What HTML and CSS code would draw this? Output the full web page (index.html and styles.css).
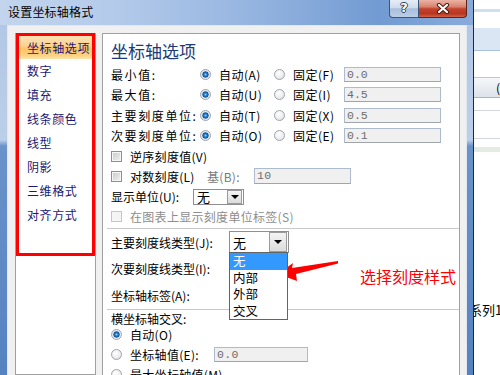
FILE: index.html
```html
<!DOCTYPE html>
<html lang="zh-CN">
<head>
    <meta charset="UTF-8">
    <title>设置坐标轴格式</title>
    <link rel="stylesheet" href="styles.css">
</head>
<body>
<div class="screen">
    <div class="window">
        <div class="titlebar">
            <span class="title">设置坐标轴格式</span>
            <div class="caption-buttons">
                <span class="btn-help">?</span>
                <span class="btn-close">
                    <svg width="14" height="11" viewBox="0 0 14 11">
                        <path d="M3 2 L11 9 M11 2 L3 9" stroke="#4a1c12" stroke-width="4.2" stroke-linecap="round"/>
                        <path d="M3 2 L11 9 M11 2 L3 9" stroke="#ffffff" stroke-width="2.2" stroke-linecap="round"/>
                    </svg>
                </span>
            </div>
        </div>

        <div class="client">
            <div class="nav-panel">
                <ul class="nav-list">
                    <li class="active">坐标轴选项</li>
                    <li>数字</li>
                    <li>填充</li>
                    <li>线条颜色</li>
                    <li>线型</li>
                    <li>阴影</li>
                    <li>三维格式</li>
                    <li>对齐方式</li>
                </ul>
            </div>

            <div class="options-panel">
                <h2 class="section-title">坐标轴选项</h2>

                <div class="value-row first">
                    <span class="value-label">最小值:</span>
                    <span class="opt opt-auto"><i class="radio checked"></i>自动(A)</span>
                    <span class="opt opt-fixed"><i class="radio"></i>固定(F)</span>
                    <span class="field">0.0</span>
                </div>
                <div class="value-row">
                    <span class="value-label">最大值:</span>
                    <span class="opt opt-auto"><i class="radio checked"></i>自动(U)</span>
                    <span class="opt opt-fixed"><i class="radio"></i>固定(I)</span>
                    <span class="field">4.5</span>
                </div>
                <div class="value-row">
                    <span class="value-label">主要刻度单位:</span>
                    <span class="opt opt-auto"><i class="radio checked"></i>自动(T)</span>
                    <span class="opt opt-fixed"><i class="radio"></i>固定(X)</span>
                    <span class="field">0.5</span>
                </div>
                <div class="value-row">
                    <span class="value-label">次要刻度单位:</span>
                    <span class="opt opt-auto"><i class="radio checked"></i>自动(O)</span>
                    <span class="opt opt-fixed"><i class="radio"></i>固定(E)</span>
                    <span class="field">0.1</span>
                </div>

                <div class="check-row"><i class="checkbox"></i>逆序刻度值(V)</div>
                <div class="check-row">
                    <i class="checkbox"></i><span class="log-text">对数刻度(L)</span>
                    <span class="base-label">基(B):</span>
                    <span class="field field-base">10</span>
                </div>
                <div class="unit-row">
                    <span class="unit-label">显示单位(U):</span>
                    <span class="select unit-select"><span class="select-value">无</span><span class="select-btn"><i class="caret"></i></span></span>
                </div>
                <div class="check-row disabled"><i class="checkbox"></i>在图表上显示刻度单位标签(S)</div>

                <hr class="sep">

                <div class="tick-row">
                    <span class="tick-label">主要刻度线类型(J):</span>
                    <span class="select tick-select">
                        <span class="select-value">无</span><span class="select-btn"><i class="caret"></i></span>
                        <ul class="dropdown">
                            <li class="selected">无</li>
                            <li>内部</li>
                            <li>外部</li>
                            <li>交叉</li>
                        </ul>
                    </span>
                </div>
                <div class="tick-row">
                    <span class="tick-label">次要刻度线类型(I):</span>
                </div>
                <div class="tick-row tall">
                    <span class="tick-label">坐标轴标签(A):</span>
                </div>

                <hr class="sep flush">

                <div class="cross-title">横坐标轴交叉:</div>
                <div class="radio-row"><i class="radio checked"></i>自动(O)</div>
                <div class="radio-row"><i class="radio"></i><span class="cross-text">坐标轴值(E):</span><span class="field field-cross">0.0</span></div>
                <div class="radio-row"><i class="radio"></i>最大坐标轴值(M)</div>

                <!-- 标注：箭头和说明文字 -->
                <svg class="note-arrow" width="75" height="35" viewBox="0 0 75 35">
                    <polygon points="8,19 23,8 22,13 68,6 68,8.5 26,19 27,26" fill="#ff0000"/>
                </svg>
                <span class="note-text">选择刻度样式</span>
            </div>
        </div>
    </div>

    <div class="backdrop">
        <div class="bd-gap h9"></div>
        <div class="bd-line light"></div>
        <div class="bd-gap h16"></div>
        <div class="bd-band"></div>
        <div class="bd-rule"></div>
        <div class="bd-gap h26"></div>
        <div class="bd-button">(</div>
        <div class="bd-gap h12"></div>
        <div class="bd-hair"></div>
        <div class="bd-gap h27"></div>
        <div class="bd-hair"></div>
        <div class="bd-gap h8"></div>
        <div class="bd-green"></div>
        <div class="bd-gap h150"></div>
        <div class="bd-legend">系列1</div>
    </div>
</div>
</body>
</html>
```

FILE: styles.css
```css
body {
    margin: 0;
    font-family: "Noto Sans CJK SC", "Noto Sans", sans-serif;
    font-size: 12px;
    color: #000;
}
.screen {
    display: flex;
    width: 500px;
    height: 375px;
    overflow: hidden;
}

/* 窗口外框 */
.window {
    flex: none;
    width: 473px;
    border-right: 1px solid #1d2b3c;
    display: flex;
    flex-direction: column;
    background: linear-gradient(#b0c6e4 0, #bccfe9 140px, #6a93ca 146px, #5682c1 100%);
}
.titlebar {
    height: 25px;
    display: flex;
    align-items: flex-start;
    background: linear-gradient(90deg, #c3d5ed 0, #b3caea 25%, #93b3df 55%, #729bd3 80%, #88abda 100%);
}
.title {
    flex: 1;
    padding-left: 8px;
    line-height: 24px;
    font-size: 12px;
    letter-spacing: 0.2px;
}
.caption-buttons {
    display: flex;
    margin-right: 6px;
}
.btn-help {
    width: 28px;
    height: 17px;
    border: 1px solid #3c5677;
    border-top: none;
    border-radius: 0 0 0 4px;
    background: linear-gradient(#e6edf6, #cfdbec 45%, #a9bedc 52%, #bccfe7);
    text-align: center;
    line-height: 17px;
    font: bold 13px "DejaVu Sans", sans-serif;
    color: #fff;
    text-shadow: 1px 0 #2c405a, -1px 0 #2c405a, 0 1px #2c405a, 0 -1px #2c405a;
}
.btn-close {
    width: 47px;
    height: 17px;
    border: 1px solid #5e2418;
    border-top: none;
    border-left: none;
    border-radius: 0 0 4px 0;
    background: linear-gradient(#ebb2a5, #d8826e 40%, #c5432c 52%, #b8351f 80%, #d26247);
    display: flex;
    align-items: center;
    justify-content: center;
}

/* 对话框客户区 */
.client {
    flex: 1;
    min-height: 0;
    margin: 0 6px 0 7px;
    padding: 7px 6px 0 7px;
    border: 1px solid #e2e8f0;
    border-bottom: none;
    background-color: #f0f0f0;
    display: flex;
    gap: 6px;
    overflow: hidden;
}

/* 左侧导航 */
.nav-panel {
    flex: none;
    width: 79px;
    background-color: #fff;
    border: 1px solid #a0a0a0;
    border-top: none;
}
.nav-list {
    list-style: none;
    margin: 0;
    padding: 0;
    height: 217px;
    border: 3px solid #ff0000;
}
.nav-list li {
    height: 24px;
    line-height: 24px;
    padding-left: 8px;
    color: #181877;
    letter-spacing: 0.6px;
    white-space: nowrap;
}
.nav-list li.active {
    height: 23px;
    line-height: 23px;
    background: linear-gradient(#fbe2b6 0, #fdd492 40%, #fcc468 55%, #fdd282 85%, #fde6ae 100%);
}

/* 右侧选项 */
.options-panel {
    flex: 1;
    position: relative;
    background-color: #fff;
    border: 1px solid #a0a0a0;
    border-bottom: none;
    padding: 0 4px 0 8px;
    white-space: nowrap;
}
.section-title {
    margin: 0;
    padding-top: 5px;
    font-size: 17px;
    font-weight: normal;
    line-height: 24px;
    color: #1d3b78;
}
.value-row {
    display: flex;
    align-items: center;
    height: 20.5px;
}
.value-row.first {
    margin-top: 1px;
}
.value-label {
    flex: none;
    width: 89px;
    letter-spacing: 1.6px;
}
.opt {
    flex: none;
    display: flex;
    align-items: center;
    letter-spacing: 0.5px;
}
.opt-auto {
    width: 74px;
}
.opt-fixed {
    width: 70px;
}
.radio {
    flex: none;
    box-sizing: border-box;
    width: 11px;
    height: 11px;
    margin-right: 8px;
    border: 1px solid #9ba4ae;
    border-radius: 50%;
    background: radial-gradient(circle at 40% 35%, #fff 0, #ececec 60%, #d6d6d6 100%);
}
.radio.checked {
    background: radial-gradient(circle, #8fd0ff 0, #2a84d0 1.4px, #0b4f94 2.8px, #d9dee4 3.4px, #f4f4f4 5px);
}
.checkbox {
    flex: none;
    box-sizing: border-box;
    width: 11px;
    height: 11px;
    margin-right: 8px;
    border: 1px solid #8e8f8f;
    background: linear-gradient(135deg, #c8c8c8, #f3f3f3);
    box-shadow: inset 0 0 0 1px #f6f6f6;
}
.field {
    flex: none;
    box-sizing: border-box;
    width: 97px;
    height: 15px;
    padding-left: 2px;
    border: 1px solid #aebbcc;
    border-bottom-color: #a0a5ab;
    background-color: #f0f0f0;
    font: 11.5px "Liberation Mono", monospace;
    line-height: 13px;
    color: #6d6d6d;
}
.check-row {
    display: flex;
    align-items: center;
    height: 20px;
    letter-spacing: 0.3px;
}
.check-row.disabled {
    height: 19px;
    color: #8d8d8d;
}
.check-row.disabled .checkbox {
    border-color: #c6c6c6;
    background: #f4f4f4;
}
.log-text {
    flex: none;
    width: 77px;
}
.base-label {
    flex: none;
    width: 47px;
    color: #7a7a7a;
}
.field-base {
    height: 16px;
}
.unit-row {
    display: flex;
    align-items: center;
    height: 21px;
}
.unit-label {
    flex: none;
    width: 82px;
}

/* 下拉框 */
.select {
    position: relative;
    flex: none;
    box-sizing: border-box;
    display: flex;
    align-items: stretch;
    border: 1px solid #8f8f8f;
    background-color: #fff;
}
.select-value {
    flex: 1;
    padding-left: 3px;
    display: flex;
    align-items: center;
    font-size: 13px;
}
.select-btn {
    box-sizing: border-box;
    border: 1px solid #9b9b9b;
    background: linear-gradient(#f4f4f4, #dcdcdc);
    display: flex;
    align-items: center;
    justify-content: center;
}
.caret {
    width: 0;
    height: 0;
    border-left: 4px solid transparent;
    border-right: 4px solid transparent;
    border-top: 4px solid #000;
}
.unit-select {
    width: 51px;
    height: 16px;
}
.unit-select .select-btn {
    width: 15px;
    margin: 0 1px 0 0;
}
.tick-select {
    width: 60px;
    height: 22px;
}
.tick-select .select-btn {
    width: 18px;
    margin: 0 1px 0 0;
}
.dropdown {
    position: absolute;
    z-index: 2;
    left: -1px;
    top: 20px;
    width: 59px;
    box-sizing: border-box;
    margin: 0;
    padding: 0;
    list-style: none;
    background-color: #fff;
    border: 1px solid #646464;
}
.dropdown li {
    height: 16.5px;
    line-height: 16.5px;
    padding-left: 3px;
    font-size: 12.5px;
}
.dropdown li.selected {
    background-color: #3399ff;
    color: #fff;
}

.sep {
    margin: 2px -4px 0 -4px;
    height: 0;
    border: 0;
    border-top: 1px solid #c8c8c8;
}
.sep.flush {
    margin-top: 0;
}
.tick-row {
    display: flex;
    align-items: center;
    height: 26px;
}
.tick-row.tall {
    height: 28px;
}
.tick-label {
    flex: none;
    width: 118px;
}
.cross-title {
    margin-top: 2px;
    height: 12px;
    line-height: 14px;
}
.radio-row {
    display: flex;
    align-items: center;
    height: 20px;
    letter-spacing: 0.3px;
}
.cross-text {
    flex: none;
    width: 84px;
}
.field-cross {
    width: 94px;
}

/* 标注 */
.note-arrow {
    position: absolute;
    left: 167px;
    top: 221px;
}
.note-text {
    position: absolute;
    left: 257px;
    top: 232px;
    font-size: 16px;
    line-height: 20px;
    color: #ff0000;
}

/* 右侧露出的表格背景 */
.backdrop {
    flex: none;
    width: 26px;
    background-color: #fff;
    overflow: hidden;
}
.bd-gap.h9 { height: 9px; }
.bd-gap.h16 { height: 16px; }
.bd-gap.h26 { height: 26px; }
.bd-gap.h12 { height: 12px; }
.bd-gap.h27 { height: 27px; }
.bd-gap.h8 { height: 8px; }
.bd-gap.h150 { height: 150px; }
.bd-line.light {
    height: 3px;
    background-color: #cfdff2;
}
.bd-band {
    height: 22px;
    background-color: #dbe6f4;
}
.bd-rule {
    height: 1px;
    background-color: #a9c0de;
}
.bd-button {
    height: 19px;
    border-top: 1px solid #bcc7d4;
    border-bottom: 1px solid #aab5c2;
    background: linear-gradient(#f5f7fa, #dde3ea);
    padding-left: 22px;
    line-height: 19px;
    font-size: 12px;
}
.bd-hair {
    height: 1px;
    background-color: #d4d8dc;
}
.bd-green {
    height: 5px;
    background-color: #e2ece2;
}
.bd-legend {
    margin-left: -5px;
    line-height: 16px;
    font-size: 13px;
    white-space: nowrap;
}
```
